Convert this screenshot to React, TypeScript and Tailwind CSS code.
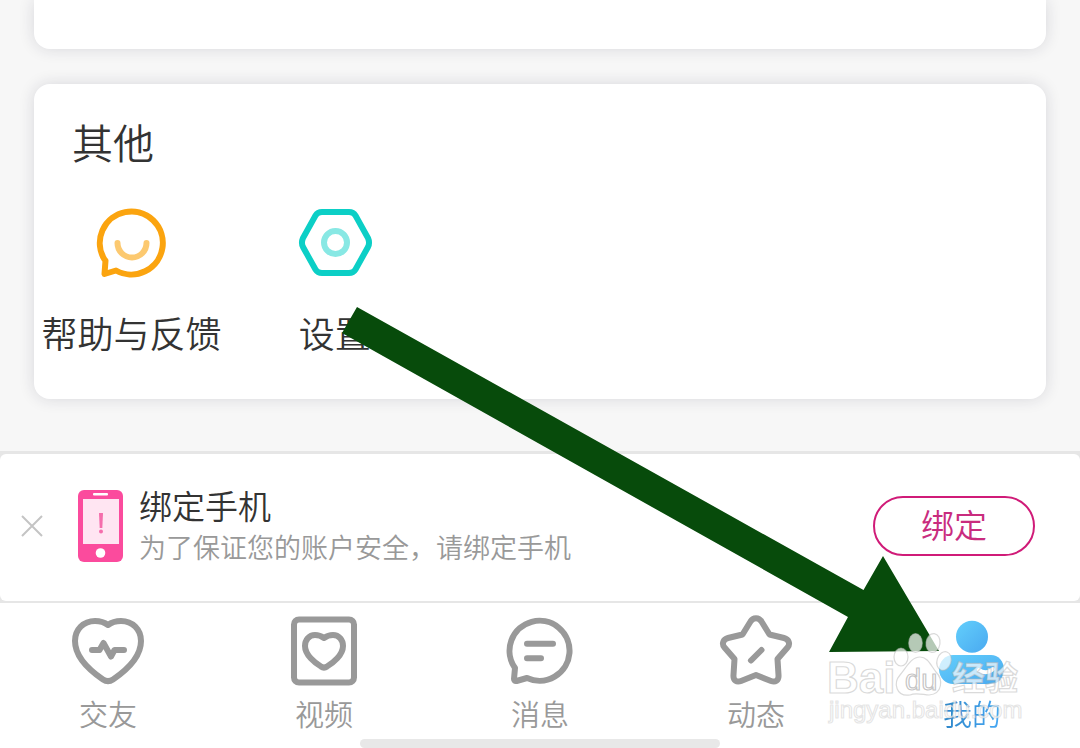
import React from "react";

type Tab = { label: string; icon: React.ReactNode; active?: boolean };

const line = {
  fill: "none",
  stroke: "#999999",
  strokeWidth: 6,
  strokeLinecap: "round" as const,
  strokeLinejoin: "round" as const,
};

function Icon({ children }: { children: React.ReactNode }) {
  return (
    <svg viewBox="0 0 72 72" className="size-[72px] overflow-visible" aria-hidden="true">
      {children}
    </svg>
  );
}

const tabs: Tab[] = [
  {
    label: "交友",
    icon: (
      <g {...line}>
        <path d="M36 10C32 7 28 6 23 6C11.500 6 3 14.500 3 26C3 43 20 57 31 64.500C34.500 66.800 37.500 66.800 41 64.500C52 57 69 43 69 26C69 14.500 60.500 6 49 6C44 6 40 7 36 10Z" />
        <path d="M20 35H27.500L31.500 28L39 41.500L42.500 35H52" />
      </g>
    ),
  },
  {
    label: "视频",
    icon: (
      <g {...line}>
        <rect x="6" y="4.500" width="60" height="63" rx="5" />
        <path d="M36 23C33 20.800 30 20 27 20C21 20 17 25 17 31C17 40 27 48 33 51.500C35 53 37 53 39 51.500C45 48 55 40 55 31C55 25 51 20 45 20C42 20 39 20.800 36 23Z" />
      </g>
    ),
  },
  {
    label: "消息",
    icon: (
      <g {...line}>
        <path d="M11 53A30 30 0 1 1 23 63L12.500 66C11 66.400 10 65.500 10 64Z" />
        <path d="M23 28.700H49M23 43.300H37" />
      </g>
    ),
  },
  {
    label: "动态",
    icon: (
      <g {...line}>
        <path d="M30.500 6.500C33 2 39 2 41.500 6.500L49.500 19.500L64 23C69 24.300 70.500 29 67.500 32.500L57.500 44L58.500 60C59 66 55 67.500 51 66L36 60L21 66C17 67.500 13 66 13.500 60L14.500 44L4.500 32.500C1.500 29 3 24.300 8 23L22.500 19.500Z" />
        <path d="M31 45.500L41.500 35" />
      </g>
    ),
  },
  {
    label: "我的",
    active: true,
    icon: (
      <g>
        <defs>
          <linearGradient id="person" x1="0" y1="0" x2="1" y2="1">
            <stop offset="0" stopColor="#63cffc" />
            <stop offset="1" stopColor="#4aa9f0" />
          </linearGradient>
        </defs>
        <circle cx="36" cy="21.700" r="16" fill="url(#person)" />
        <path
          d="M17 40H55C62 40 68 46 68 54.500C68 63 62 69 55 69H17C10 69 3 63 3 54.500C3 46 10 40 17 40Z"
          fill="url(#person)"
        />
        <path d="M43 55Q50 60 57 54" fill="none" stroke="#fff" strokeWidth="4" strokeLinecap="round" />
      </g>
    ),
  },
];

function Arrow() {
  return (
    <svg
      viewBox="0 0 1080 748"
      className="pointer-events-none absolute left-0 top-0 w-[1080px]"
      aria-hidden="true"
    >
      <polygon points="357,307 342,333 848,617 829,652 939,651 883,556 863.500,590" fill="#074b0b" />
    </svg>
  );
}

function Watermark() {
  const mark = {
    fill: "#ffffff",
    fillOpacity: 0.7,
    stroke: "#b5b5b5",
    strokeOpacity: 0.5,
    strokeWidth: 1.2,
  };
  return (
    <svg viewBox="820 625 210 105" className="pointer-events-none absolute left-[820px] top-[625px] w-[210px]">
      <g {...mark}>
        <ellipse cx="901" cy="657" rx="7" ry="9" />
        <ellipse cx="915.500" cy="643" rx="6.800" ry="9.500" />
        <ellipse cx="933" cy="643" rx="7" ry="9.500" transform="rotate(8 933 643)" />
        <ellipse cx="944" cy="661" rx="7" ry="9.500" transform="rotate(18 944 661)" />
        <path d="M920 657C928 657 931 666 936 672C943 679 943 694 929 695C924 695 916 692 910 695C896 697 893 683 900 675C906 668 911 657 920 657Z" />
      </g>
      <g {...mark} className="font-['Liberation_Sans','Noto_Sans_CJK_SC',sans-serif]">
        <text x="827" y="693" className="text-[44px] font-bold">Bai</text>
        <text x="905" y="690" className="text-[29px]" strokeOpacity="0.8">du</text>
        <text x="952" y="690" className="text-[33px] font-bold">经验</text>
        <text x="829" y="718" className="text-[24px]" strokeOpacity="0.35">jingyan.baidu.com</text>
      </g>
    </svg>
  );
}

export default function App() {
  return (
    <div className="relative overflow-hidden bg-[#f7f7f7] font-['Noto_Sans_CJK_SC',sans-serif] font-[350] text-[#333333]">
      <main className="px-[34px] pb-[52px]">
        <section className="h-[49px] rounded-b-2xl bg-white shadow-[0_0_16px_rgba(30,30,60,0.14)]" />
        <section className="mt-[35px] rounded-2xl bg-white pt-8 pb-[46px] shadow-[0_0_16px_rgba(30,30,60,0.14)]">
          <h2 className="px-[38px] text-[41px] leading-[50px]">其他</h2>
          <div className="mt-[41px] -ml-1 grid grid-cols-5">
            <button type="button" className="flex flex-col items-center gap-8">
              <Icon>
                <g fill="none" strokeWidth="6" strokeLinecap="round" strokeLinejoin="round">
                  <path
                    d="M8.500 52.500A31.500 31.500 0 1 1 20 63.500L8.500 67L9.500 53.500Z"
                    stroke="#fba40f"
                  />
                  <path d="M21.500 36A14.500 14.500 0 0 0 50.500 36" stroke="#fcc970" />
                </g>
              </Icon>
              <span className="whitespace-nowrap text-4xl leading-[42px]">帮助与反馈</span>
            </button>
            <button type="button" className="flex flex-col items-center gap-8">
              <Icon>
                <path
                  d="M23 5H50C53 5 55 6 56.500 8.500L69 31C70.500 34.500 70.500 37 69 40L56.500 62.500C55 65 53 66 50 66H23C20 66 18 65 16.500 62.500L4 40C2.500 37 2.500 34.500 4 31L16.500 8.500C18 6 20 5 23 5Z"
                  fill="none"
                  stroke="#0ccfc6"
                  strokeWidth="6"
                />
                <circle cx="36.500" cy="35.500" r="11.500" fill="none" stroke="#88e8e4" strokeWidth="6" />
              </Icon>
              <span className="whitespace-nowrap text-4xl leading-[42px]">设置</span>
            </button>
          </div>
        </section>
      </main>

      <aside className="bg-[#e6e6e6] pt-[3px] pb-0.5">
        <div className="flex h-[147px] items-center rounded-md bg-white pr-[45px] pb-1 pl-5">
          <button type="button" aria-label="关闭">
            <svg viewBox="0 0 24 24" className="size-6" aria-hidden="true">
              <path d="M2 2L22 22M22 2L2 22" stroke="#c4c4c4" strokeWidth="2" />
            </svg>
          </button>
          <svg viewBox="0 0 46 72" className="ml-[34px] h-[72px] w-[46px]" aria-hidden="true">
            <rect width="45" height="72" rx="6" fill="#fb4b9d" />
            <rect x="15" y="3" width="15" height="2.500" rx="1" fill="#fff" />
            <rect x="5" y="9" width="36" height="45" fill="#ffe5f2" />
            <path d="M21 23H25L24.300 38H21.700Z" fill="#f56dac" />
            <circle cx="23" cy="41.500" r="2" fill="#f56dac" />
            <circle cx="22.500" cy="63" r="4.800" fill="#fff" />
          </svg>
          <div className="ml-[15px] flex-1">
            <h3 className="text-[33px] leading-[42px]">绑定手机</h3>
            <p className="text-[27px] leading-[42px] text-[#999999]">为了保证您的账户安全，请绑定手机</p>
          </div>
          <button
            type="button"
            className="h-[60px] w-[162px] rounded-full border-2 border-[#d01b78] pb-0.5 text-[33px] leading-none text-[#c92c7e]"
          >
            绑定
          </button>
        </div>
      </aside>

      <nav className="relative grid grid-cols-5 bg-white pt-3 pb-[17px]">
        {tabs.map((tab) => (
          <a key={tab.label} href="#" className="flex flex-col items-center gap-2">
            <Icon>{tab.icon}</Icon>
            <span
              className={
                tab.active
                  ? "bg-linear-to-r from-[#2f86c8] to-[#46a8f5] bg-clip-text text-[29px] leading-9 text-transparent"
                  : "text-[29px] leading-9 text-[#999999]"
              }
            >
              {tab.label}
            </span>
          </a>
        ))}
        <div className="absolute bottom-0 left-1/3 h-[9px] w-1/3 rounded-full bg-[#e8e8e8]" />
      </nav>

      <Arrow />
      <Watermark />
    </div>
  );
}
